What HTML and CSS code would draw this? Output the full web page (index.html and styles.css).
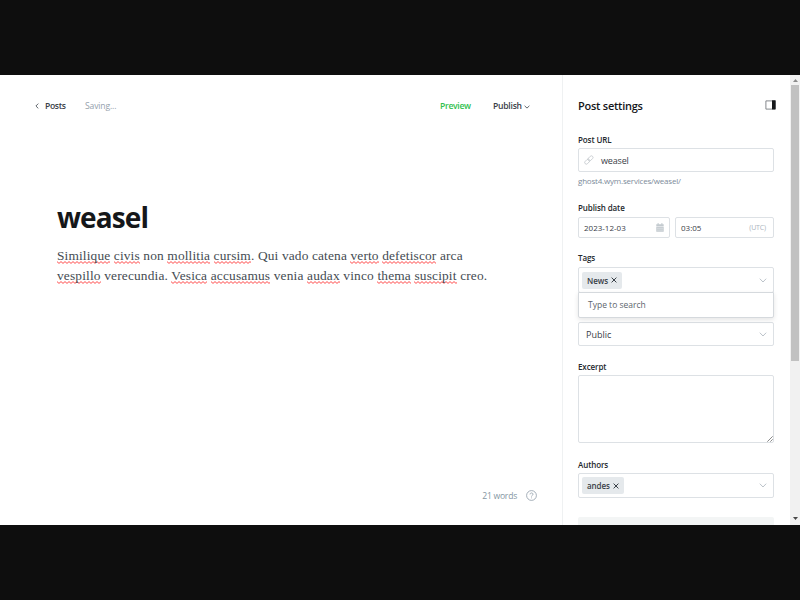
FILE: index.html
```
<!DOCTYPE html>
<html lang="en">
<head>
<meta charset="utf-8">
<title>weasel</title>
<link rel="stylesheet" href="styles.css">
</head>
<body>
<div class="app">
  <main class="editor">
    <header class="topbar">
      <a class="back"><svg class="back-icon" width="4" height="6" viewBox="0 0 4 6"><path d="M3.3.6.9 3l2.4 2.4"/></svg><span>Posts</span></a>
      <span class="status">Saving...</span>
      <span class="preview">Preview</span>
      <span class="publish">Publish</span><svg class="publish-icon" width="6" height="4" viewBox="0 0 6 4"><path d="M.6.8 3 3.1 5.4.8"/></svg>
    </header>
    <article class="post">
      <h1>weasel</h1>
      <p class="line one"><u>Similique</u> <u>civis</u> non <u>mollitia</u> <u>cursim</u>. Qui vado catena <u>verto</u> <u>defetiscor</u> arca</p>
      <p class="line two"><u>vespillo</u> verecundia. <u>Vesica</u> <u>accusamus</u> venia <u>audax</u> vinco <u>thema</u> <u>suscipit</u> creo.</p>
    </article>
    <footer class="wordcount"><span>21 words</span>
      <svg width="11" height="11" viewBox="0 0 11 11"><circle cx="5.5" cy="5.5" r="4.9"/><path d="M4 4.4C4 2.5 7 2.5 7 4.3 7 5.4 5.5 5.3 5.5 6.5M5.5 7.5v.8"/></svg>
    </footer>
  </main>
  <aside class="settings">
    <div class="panel-head"><h2>Post settings</h2>
      <svg width="11" height="10" viewBox="0 0 11 10"><path d="M.9.9h9.2v8.2H.9z" fill="#fff" stroke="#777c80" stroke-width=".9"/><path d="M7 .3h3.6v9.1H7z" fill="#15171a"/></svg>
    </div>
    <label class="l-url">Post URL</label>
    <div class="field url">
      <svg width="10" height="10" viewBox="0 0 10 10"><g transform="rotate(-45 5 5)"><rect x="-.3" y="3.3" width="5.8" height="3.2" rx="1.6"/><rect x="4.3" y="3.3" width="5.8" height="3.2" rx="1.6"/></g></svg>
      <span>weasel</span>
    </div>
    <div class="hint">ghost4.wym.services/weasel/</div>
    <label class="l-date">Publish date</label>
    <div class="dates">
      <div class="field date"><span>2023-12-03</span>
        <svg width="8" height="9" viewBox="0 0 8 9"><path d="M.3 1.3h7.4v2H.3zM.3 3.8h7.4v4.9H.3zM1.6.1h1v2h-1zM5.4.1h1v2h-1z" fill="#c3cacf"/><path d="M1.5 5.3h5M1.5 7.1h5" stroke="#fff" stroke-width=".7" stroke-dasharray="1 1"/></svg>
      </div>
      <div class="field time"><span>03:05</span><small>(UTC)</small></div>
    </div>
    <label class="l-tags">Tags</label>
    <div class="field tags"><span class="chip">News<svg width="6" height="6" viewBox="0 0 6 6"><path d="m.6.6 4.8 4.8M5.4.6.6 5.4"/></svg></span>
      <svg class="chev" width="8" height="5" viewBox="0 0 8 5"><path d="m.8.7 3.2 3.3L7.2.7"/></svg>
      <div class="dropdown">Type to search</div>
    </div>
    <div class="field access"><span>Public</span><svg class="chev" width="8" height="5" viewBox="0 0 8 5"><path d="m.8.7 3.2 3.3L7.2.7"/></svg></div>
    <label class="l-excerpt">Excerpt</label>
    <div class="field excerpt"><svg width="6" height="6" viewBox="0 0 6 6"><path d="M.3 5.7 5.7.3M3.3 5.7l2.4-2.4"/></svg></div>
    <label class="l-authors">Authors</label>
    <div class="field authors"><span class="chip">andes<svg width="6" height="6" viewBox="0 0 6 6"><path d="m.6.6 4.8 4.8M5.4.6.6 5.4"/></svg></span>
      <svg class="chev" width="8" height="5" viewBox="0 0 8 5"><path d="m.8.7 3.2 3.3L7.2.7"/></svg></div>
    <div class="next"></div>
  </aside>
  <div class="scrollbar">
    <svg width="5" height="3" viewBox="0 0 5 3"><path d="M0 3 2.5 0 5 3z" fill="#8b8b8b"/></svg>
    <div class="thumb"></div>
    <svg class="down" width="5" height="3" viewBox="0 0 5 3"><path d="M0 0h5L2.5 3z" fill="#484848"/></svg>
  </div>
</div>
</body>
</html>
```
FILE: styles.css
```
* { box-sizing: border-box; margin: 0; padding: 0; }
body { width: 800px; height: 600px; overflow: hidden; background: #0e0e0e; padding-top: 75px; font-family: "Open Sans", "Noto Sans", sans-serif; color: #394047; }
svg { display: block; flex: none; fill: none; }
.app { display: flex; height: 450px; background: #fff; overflow: hidden; }
.editor { width: 562px; display: flex; flex-direction: column; }
.topbar { display: flex; align-items: center; height: 61px; padding-left: 35px; font-size: 8.6px; white-space: nowrap; }
.back { display: flex; align-items: center; gap: 6px; width: 50px; font-weight: 600; letter-spacing: -.35px; }
.back-icon, .publish-icon { stroke: #50575e; stroke-width: .9; }
.status { color: #95a1ad; letter-spacing: -.15px; }
.preview { margin-left: auto; color: #30bf4e; font-weight: 600; width: 53px; letter-spacing: -.3px; }
.publish { font-weight: 600; width: 31px; letter-spacing: -.25px; }
.publish-icon { margin: 3px 32px 0 0; }
.post { padding: 61px 0 0 57px; }
h1 { font-size: 28px; line-height: 40px; font-weight: 700; color: #15171a; letter-spacing: -.9px; }
.line { font-family: "Liberation Serif", serif; font-size: 13.4px; line-height: 20px; color: #444b52; white-space: nowrap; }
.one { margin-top: 9px; letter-spacing: .14px; }
.two { letter-spacing: .16px; }
u { text-decoration: none; padding-bottom: 1px; background: url("data:image/svg+xml,%3Csvg xmlns='http://www.w3.org/2000/svg' width='4' height='3'%3E%3Cpath d='M-1 1.5 0 .6 2 2.4 4 .6 5 1.5' fill='none' stroke='%23f44' stroke-width='.95'/%3E%3C/svg%3E") repeat-x left bottom; }
.wordcount { margin-top: auto; display: flex; align-items: center; justify-content: flex-end; gap: 9px; padding: 0 25px 22px 0; height: 37px; font-size: 8.6px; letter-spacing: -.25px; color: #8496a3; }
.wordcount svg { stroke: #8e9ba7; stroke-width: .8; }
.settings { width: 228px; border-left: 1px solid #eff1f2; padding: 0 15px; display: flex; flex-direction: column; }
.panel-head { display: flex; align-items: center; justify-content: space-between; height: 60px; width: 198px; flex: none; }
h2 { font-size: 11px; font-weight: 600; color: #15171a; letter-spacing: -.25px; }
label { font-size: 8px; line-height: 12px; font-weight: 600; color: #23282d; white-space: nowrap; letter-spacing: -.1px; }
.field { width: 196px; border: 1px solid #dde1e5; border-radius: 2px; background: #fff; display: flex; align-items: center; position: relative; flex: none; }
.url { height: 24px; margin-top: 2px; padding-left: 5px; gap: 7px; font-size: 9px; letter-spacing: -.15px; }
.l-url { margin-top: -1px; }
.url svg { stroke: #c3c8cc; stroke-width: .8; }
.hint { font-size: 8px; line-height: 12px; color: #7c8b9a; margin-top: 3px; letter-spacing: -.2px; }
.l-date { margin-top: 15px; }
.dates { display: flex; gap: 5px; margin-top: 3px; width: 196px; }
.date, .time { height: 21px; font-size: 8px; padding: 0 5px; justify-content: space-between; }
.date { width: 92px; }
.time { width: 99px; padding-right: 7px; }
.time small { font-size: 7px; color: #abb4be; letter-spacing: -.15px; }
.l-tags { margin-top: 14px; }
.tags { height: 26px; margin-top: 3px; padding: 0 6px 0 3px; justify-content: space-between; z-index: 2; }
.chip { display: flex; align-items: center; gap: 3px; height: 17px; padding: 0 5px; background: #e5e9ec; border-radius: 2px; font-size: 8px; font-weight: 600; letter-spacing: -.05px; }
.chip svg { stroke: #394047; stroke-width: 1; }
.chev { stroke: #b4bcc4; stroke-width: .9; }
.dropdown { position: absolute; left: -1px; top: 24px; width: 196px; height: 26px; border: 1px solid #d5d9dd; border-radius: 0 0 2px 2px; background: #fff; box-shadow: 0 2px 5px #0000001a; padding-left: 9px; font-size: 8.5px; line-height: 24px; color: #5d656d; }
.access { height: 24px; margin-top: 29px; padding: 0 6px 0 7px; justify-content: space-between; font-size: 9px; }
.l-excerpt { margin-top: 15px; }
.excerpt { height: 68px; margin-top: 2px; align-items: flex-end; justify-content: flex-end; }
.excerpt svg { stroke: #555; stroke-width: .7; }
.l-authors { margin-top: 16px; }
.authors { height: 25px; margin-top: 2px; padding: 0 6px 0 3px; justify-content: space-between; }
.next { width: 196px; height: 20px; flex: none; margin-top: 19px; background: #f3f5f5; border-radius: 2px; }
.scrollbar { width: 10px; background: #f1f1f1; display: flex; flex-direction: column; align-items: center; padding-top: 4px; }
.thumb { width: 8px; height: 276px; margin-top: 3px; background: #c1c1c1; }
.down { margin: auto 0 5px; }
```
